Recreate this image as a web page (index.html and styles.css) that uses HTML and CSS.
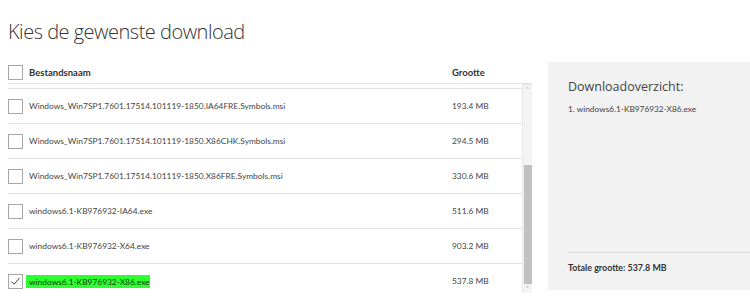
FILE: index.html
```html
<!DOCTYPE html>
<html lang="nl">

<head>
    <meta charset="UTF-8">
    <meta name="viewport" content="width=device-width, initial-scale=1.0">
    <title>Kies de gewenste download</title>
    <link rel="stylesheet" href="styles.css">
</head>

<body>
    <h1 class="title">Kies de gewenste download</h1>

    <div class="layout">
        <!-- lijst met bestanden -->
        <div class="files">
            <div class="files-head">
                <span class="box"></span>
                <span class="col-name">Bestandsnaam</span>
                <span class="col-size">Grootte</span>
            </div>
            <div class="files-body">
                <div class="rows">
                    <div class="row">
                        <span class="box"></span>
                        <span class="col-name">Windows_Win7SP1.7601.17514.101119-1850.IA64FRE.Symbols.msi</span>
                        <span class="col-size">193.4 MB</span>
                    </div>
                    <div class="row">
                        <span class="box"></span>
                        <span class="col-name">Windows_Win7SP1.7601.17514.101119-1850.X86CHK.Symbols.msi</span>
                        <span class="col-size">294.5 MB</span>
                    </div>
                    <div class="row">
                        <span class="box"></span>
                        <span class="col-name">Windows_Win7SP1.7601.17514.101119-1850.X86FRE.Symbols.msi</span>
                        <span class="col-size">330.6 MB</span>
                    </div>
                    <div class="row">
                        <span class="box"></span>
                        <span class="col-name">windows6.1-KB976932-IA64.exe</span>
                        <span class="col-size">511.6 MB</span>
                    </div>
                    <div class="row">
                        <span class="box"></span>
                        <span class="col-name">windows6.1-KB976932-X64.exe</span>
                        <span class="col-size">903.2 MB</span>
                    </div>
                    <div class="row">
                        <span class="box checked">
                            <svg viewBox="0 0 14 14" width="14" height="14"><path d="M2.5 7.5 L5.5 10.5 L11.5 3.5" fill="none" stroke="#333" stroke-width="1"/></svg>
                        </span>
                        <span class="col-name"><mark class="hl">windows6.1-KB976932-X86.exe</mark></span>
                        <span class="col-size">537.8 MB</span>
                    </div>
                </div>
                <!-- schuifbalk -->
                <div class="scrollbar">
                    <span class="arrow">&#708;</span>
                    <div class="thumb"></div>
                    <span class="arrow">&#709;</span>
                </div>
            </div>
        </div>

        <!-- overzicht -->
        <div class="summary">
            <h2>Downloadoverzicht:</h2>
            <p class="pick">1. windows6.1-KB976932-X86.exe</p>
            <div class="total">Totale grootte: 537.8 MB</div>
        </div>
    </div>
</body>

</html>
```

FILE: styles.css
```css
/* Basis */
body {
    margin: 0;
    padding: 0 0 0 8px;
    font-family: Lato, "Open Sans", sans-serif;
    color: #444;
    background: #fff;
    overflow: hidden;
}

/* Titel */
.title {
    margin: 0;
    padding-top: 18px;
    height: 42px;
    font-family: "Open Sans", sans-serif;
    font-size: 20px;
    font-weight: 300;
    color: #333;
    letter-spacing: -0.5px;
}

.layout {
    display: flex;
    gap: 16px;
}

/* Bestandenlijst */
.files {
    width: 524px;
    padding-top: 1px;
}

.files-head {
    display: flex;
    align-items: center;
    height: 22px;
    padding-right: 10px;
    font-size: 9.5px;
    font-weight: 700;
    color: #333;
    border-bottom: 1px solid #e3e3e3;
}

.files-body {
    display: flex;
    height: 209px;
    overflow: hidden;
}

.rows {
    flex: 1;
    padding-top: 4px;
}

.row {
    display: flex;
    align-items: center;
    height: 34px;
    border-top: 1px solid #e3e3e3;
    font-size: 8.4px;
}

.box {
    width: 13px;
    height: 13px;
    border: 1px solid #a6a6a6;
    flex: none;
    display: flex;
    align-items: center;
    justify-content: center;
}

.col-name {
    flex: 1;
    padding-left: 6px;
    white-space: nowrap;
}

.col-size {
    width: 70px;
}

.hl {
    background: #2eff2e;
    color: #1a3a1a;
    padding: 1.5px 0 1.5px 3px;
    margin-left: -3px;
}

/* Schuifbalk */
.scrollbar {
    width: 9px;
    display: flex;
    flex-direction: column;
    align-items: center;
    border-left: 1px solid #e8e8e8;
    border-top: 1px solid #e3e3e3;
    background: #f4f4f4;
}

.arrow {
    font-size: 7px;
    line-height: 9px;
    height: 9px;
    color: #b5b5b5;
}

.thumb {
    width: 8px;
    height: 123px;
    margin-top: 71px;
    background: #c1c1c1;
}

/* Overzicht */
.summary {
    flex: 1;
    margin-top: 2px;
    height: 228px;
    background: #f2f2f2;
    padding-left: 20px;
    display: flex;
    flex-direction: column;
}

.summary h2 {
    margin: 0;
    padding-top: 16px;
    font-family: "Open Sans", sans-serif;
    font-size: 12.5px;
    font-weight: 400;
    color: #444;
}

.pick {
    margin: 9px 0 0;
    font-size: 8.3px;
}

.total {
    margin-top: auto;
    margin-bottom: 17px;
    padding-top: 9px;
    border-top: 1px solid #dcdcdc;
    font-size: 8.9px;
    font-weight: 700;
    color: #333;
}
```
